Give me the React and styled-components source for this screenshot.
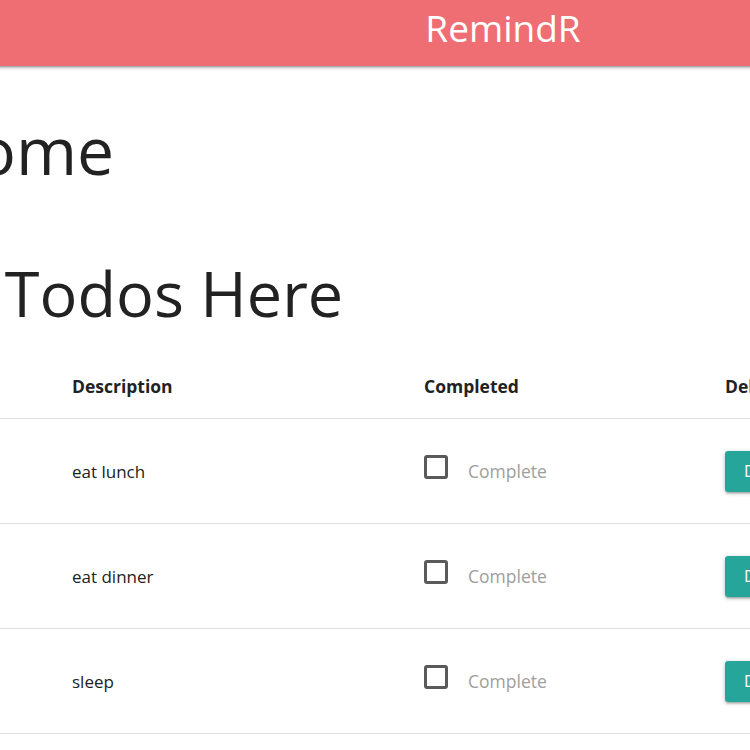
import React from "react"
import styled, { createGlobalStyle } from "styled-components"

const GlobalStyle = createGlobalStyle`
  html, body {
    margin: 0;
    padding: 0;
    overflow: hidden;
    background: #ffffff;
  }
  body {
    font-family: "Open Sans", "Noto Sans", sans-serif;
    color: rgba(0, 0, 0, 0.87);
  }
`

const todos = [
  { id: 1, description: "eat lunch" },
  { id: 2, description: "eat dinner" },
  { id: 3, description: "sleep" },
]

const App = () => (
  <>
    <GlobalStyle />
    <Page>
      <Nav>
        <Brand>RemindR</Brand>
      </Nav>
      <Content>
        <Welcome>Welcome</Welcome>
        <Subtitle>Your Todos Here</Subtitle>
        <Table>
          <HeadRow>
            <HeadCell>Title</HeadCell>
            <HeadCell>Description</HeadCell>
            <HeadCell>Completed</HeadCell>
            <HeadCell>Delete</HeadCell>
          </HeadRow>
          {todos.map(todo => (
            <Row key={todo.id}>
              <Cell>{todo.id}</Cell>
              <Cell>{todo.description}</Cell>
              <Cell>
                <CheckLabel>
                  <Box />
                  <CheckText>Complete</CheckText>
                </CheckLabel>
              </Cell>
              <Cell>
                <DeleteButton>Delete</DeleteButton>
              </Cell>
            </Row>
          ))}
        </Table>
      </Content>
    </Page>
  </>
)
export default App

const Page = styled.div`
  width: 1346px;
  margin-left: -170px;
`

const Nav = styled.nav`
  height: 66px;
  background-color: #ef6e73;
  box-shadow: 0 2px 2px 0 rgba(0, 0, 0, 0.14), 0 3px 1px -2px rgba(0, 0, 0, 0.12),
    0 1px 5px 0 rgba(0, 0, 0, 0.2);
  display: flex;
  align-items: center;
  justify-content: center;
`

const Brand = styled.div`
  color: #ffffff;
  font-size: 37px;
  line-height: 66px;
  margin-top: -10px;
`

const Content = styled.div`
  display: flex;
  flex-direction: column;
`

const Welcome = styled.h1`
  font-size: 66px;
  font-weight: 400;
  line-height: 80px;
  margin: 43px 0 0 0;
  color: #222222;
`

const Subtitle = styled.h2`
  font-size: 63px;
  font-weight: 400;
  line-height: 72px;
  margin: 68px 0 0 21px;
  color: #222222;
`

const Table = styled.div`
  margin-top: 25px;
  display: flex;
  flex-direction: column;
`

const HeadRow = styled.div`
  display: grid;
  grid-template-columns: 242px 352px 301px 1fr;
  height: 64px;
  align-items: center;
  border-bottom: 1px solid #e0e0e0;
`

const Row = styled(HeadRow)`
  height: 104px;
`

const HeadCell = styled.div`
  font-size: 17.5px;
  font-weight: 700;
  color: #222222;
`

const Cell = styled.div`
  font-size: 17px;
  color: #222222;
  display: flex;
  align-items: center;
`

const CheckLabel = styled.label`
  display: flex;
  align-items: center;
  gap: 20px;
`

const Box = styled.span`
  box-sizing: border-box;
  width: 24px;
  height: 24px;
  border: 3px solid #5a5a5a;
  border-radius: 3px;
  margin-bottom: 8px;
`

const CheckText = styled.span`
  font-size: 17.5px;
  color: #9e9e9e;
`

const DeleteButton = styled.button`
  height: 41px;
  padding: 0 19px;
  border: none;
  border-radius: 3px;
  background-color: #26a69a;
  color: #ffffff;
  font-family: inherit;
  font-size: 16px;
  text-transform: uppercase;
  letter-spacing: 0.5px;
  box-shadow: 0 2px 2px 0 rgba(0, 0, 0, 0.14), 0 3px 1px -2px rgba(0, 0, 0, 0.12),
    0 1px 5px 0 rgba(0, 0, 0, 0.2);
`
